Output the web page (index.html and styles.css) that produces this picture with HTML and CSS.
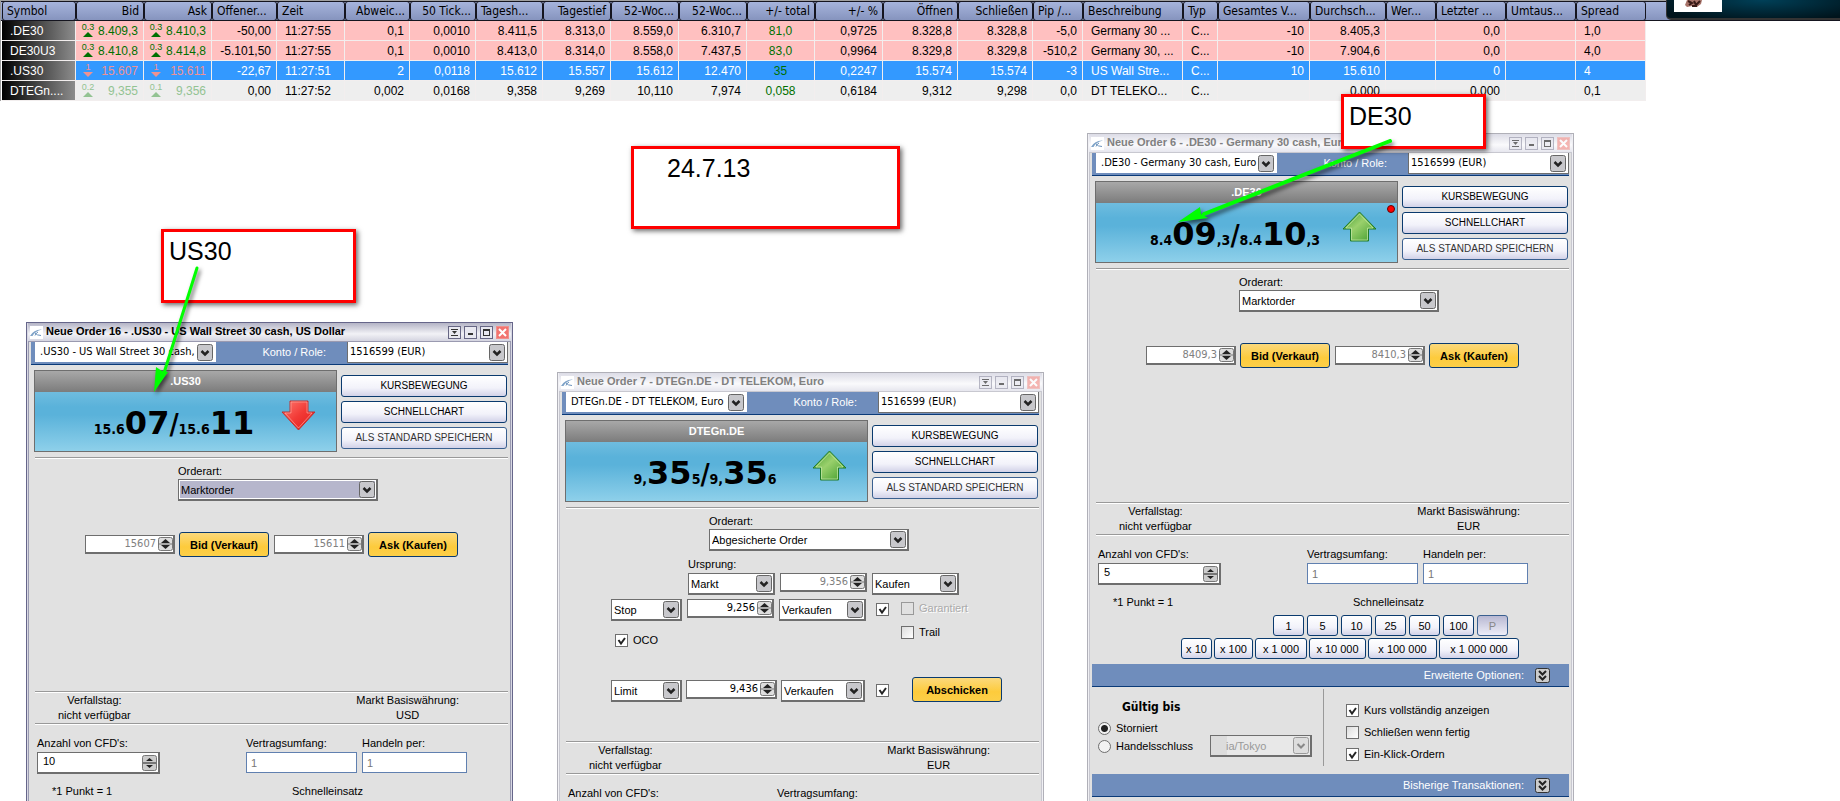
FILE: index.html
```html
<!DOCTYPE html>
<html lang="de">
<head>
<meta charset="utf-8">
<title>Trading Desktop</title>
<link rel="stylesheet" href="styles.css">
</head>
<body>
<svg class="defs" aria-hidden="true">
  <defs>
    <linearGradient id="g-green" x1="0" y1="0" x2="1" y2="1"><stop offset="0" stop-color="#3f9a2c"/><stop offset=".45" stop-color="#9ad06c"/><stop offset="1" stop-color="#3c9a2a"/></linearGradient>
    <linearGradient id="g-red" x1="0" y1="0" x2="1" y2="1"><stop offset="0" stop-color="#ff7a70"/><stop offset=".5" stop-color="#f23a36"/><stop offset="1" stop-color="#e01818"/></linearGradient>
  </defs>
  <symbol id="logo" viewBox="0 0 13 13"><rect width="13" height="13" fill="#fff"/><path d="M0 10 Q4 3 12 3.500 Q5 5 2.500 10z" fill="#7fa3c8"/><path d="M5 7 Q7 9.500 11 9.500 M5 9.500 Q6 7 8 6" stroke="#6b93bd" fill="none"/></symbol>
  <symbol id="up" viewBox="0 0 35 31"><path d="M17.500 1 L34 18 H26.500 V30 H8.500 V18 H1z" fill="url(#g-green)" stroke="#1f7a2a"/><path d="M17.500 3 L31 17 H25.500 V29 H9.500 V17 H4z" fill="none" stroke="#c4e8a8" stroke-opacity=".7"/></symbol>
  <symbol id="down" viewBox="0 0 35 31"><path d="M9 1 H27 V12 H34 L17.500 30 L1 12 H9z" fill="url(#g-red)" stroke="#c03030"/><path d="M10 2 H26 V13 H31 L17.500 28 L4 13 H10z" fill="none" stroke="#ffb0a8" stroke-opacity=".6"/></symbol>
  <symbol id="w-roll" viewBox="0 0 13 13"><path d="M3 3.500h7M3 9.500h7" stroke="#333"/><path d="M4 5h5L6.500 8z" fill="#333"/></symbol>
  <symbol id="w-min" viewBox="0 0 13 13"><path d="M4 8h5" stroke="#333" stroke-width="2"/></symbol>
  <symbol id="w-max" viewBox="0 0 13 13"><rect x="3.500" y="4.500" width="6" height="5" fill="none" stroke="#333"/><path d="M3 4h7" stroke="#333" stroke-width="2"/></symbol>
  <symbol id="w-close" viewBox="0 0 13 13"><path d="M3 3l7 7M10 3l-7 7" stroke="#fff" stroke-width="2"/></symbol>
  <symbol id="chev" viewBox="0 0 15 15"><rect x=".5" y=".5" width="14" height="14" rx="2" fill="#ccc" stroke="#333"/><path d="M4 3l3.500 3.500L11 3M4 8l3.500 3.500L11 8" fill="none" stroke="#222" stroke-width="2"/></symbol>
</svg>

<main class="desktop">
  <section class="quotes">
    <table class="quote-table">
      <colgroup>
        <col class="w74"><col class="w68"><col class="w68"><col class="w65"><col class="w68"><col class="w65"><col class="w66"><col class="w67"><col class="w68"><col class="w68"><col class="w68"><col class="w68"><col class="w68"><col class="w75"><col class="w75"><col class="w50"><col class="w100"><col class="w35"><col class="w92"><col class="w76"><col class="w50"><col class="w70"><col class="w70"><col class="w70">
      </colgroup>
      <thead>
        <tr><th>Symbol</th><th class="r">Bid</th><th class="r">Ask</th><th>Offener...</th><th>Zeit</th><th class="r">Abweic...</th><th class="r">50 Tick...</th><th>Tagesh...</th><th class="r">Tagestief</th><th class="r">52-Woc...</th><th class="r">52-Woc...</th><th class="r">+/- total</th><th class="r">+/- %</th><th class="r">Öffnen</th><th class="r">Schließen</th><th>Pip /...</th><th>Beschreibung</th><th>Typ</th><th>Gesamtes V...</th><th>Durchsch...</th><th>Wer...</th><th>Letzter ...</th><th>Umtaus...</th><th>Spread</th></tr>
      </thead>
      <tbody>
        <tr class="row-pink"><td class="sym">.DE30</td><td><div class="price"><span class="tick up">0.3</span>8.409,3</div></td><td><div class="price"><span class="tick up">0.3</span>8.410,3</div></td><td>-50,00</td><td class="l">11:27:55</td><td>0,1</td><td>0,0010</td><td>8.411,5</td><td>8.313,0</td><td>8.559,0</td><td>6.310,7</td><td class="c">81,0</td><td>0,9725</td><td>8.328,8</td><td>8.328,8</td><td>-5,0</td><td class="l">Germany 30 ...</td><td class="l">C...</td><td>-10</td><td>8.405,3</td><td></td><td>0,0</td><td></td><td class="l">1,0</td></tr>
        <tr class="row-pink"><td class="sym">DE30U3</td><td><div class="price"><span class="tick up">0.3</span>8.410,8</div></td><td><div class="price"><span class="tick up">0.3</span>8.414,8</div></td><td>-5.101,50</td><td class="l">11:27:55</td><td>0,1</td><td>0,0010</td><td>8.413,0</td><td>8.314,0</td><td>8.558,0</td><td>7.437,5</td><td class="c">83,0</td><td>0,9964</td><td>8.329,8</td><td>8.329,8</td><td>-510,2</td><td class="l">Germany 30, ...</td><td class="l">C...</td><td>-10</td><td>7.904,6</td><td></td><td>0,0</td><td></td><td class="l">4,0</td></tr>
        <tr class="row-blue"><td class="sym">.US30</td><td><div class="price"><span class="tick down">1</span>15.607</div></td><td><div class="price"><span class="tick down">1</span>15.611</div></td><td>-22,67</td><td class="l">11:27:51</td><td>2</td><td>0,0118</td><td>15.612</td><td>15.557</td><td>15.612</td><td>12.470</td><td class="c">35</td><td>0,2247</td><td>15.574</td><td>15.574</td><td>-3</td><td class="l">US Wall Stre...</td><td class="l">C...</td><td>10</td><td>15.610</td><td></td><td>0</td><td></td><td class="l">4</td></tr>
        <tr class="row-grey"><td class="sym">DTEGn....</td><td><div class="price"><span class="tick up">0.2</span>9,355</div></td><td><div class="price"><span class="tick up">0.1</span>9,356</div></td><td>0,00</td><td class="l">11:27:52</td><td>0,002</td><td>0,0168</td><td>9,358</td><td>9,269</td><td>10,110</td><td>7,974</td><td class="c">0,058</td><td>0,6184</td><td>9,312</td><td>9,298</td><td>0,0</td><td class="l">DT TELEKO...</td><td class="l">C...</td><td></td><td>0,000</td><td></td><td>0,000</td><td></td><td class="l">0,1</td></tr>
      </tbody>
    </table>
    <div class="banner"><svg class="avatar" viewBox="0 0 48 12"><rect width="48" height="12" fill="#fff"/><path d="M13 0h15l-1 4-4 3-5-1-5 1-2-2z" fill="#a8746a"/><path d="M14 1l4 2-3 2M20 1l2 4 4-4M18 6h5" stroke="#3a1c18" stroke-width="2" fill="none"/></svg></div>
  </section>

  <section class="window win-us active">
    <header class="titlebar"><svg class="logo"><use href="#logo"/></svg><h2>Neue Order 16 - .US30 - US Wall Street 30 cash, US Dollar</h2>
      <button class="wb" aria-label="Einrollen"><svg><use href="#w-roll"/></svg></button><button class="wb" aria-label="Minimieren"><svg><use href="#w-min"/></svg></button><button class="wb" aria-label="Maximieren"><svg><use href="#w-max"/></svg></button><button class="wb close" aria-label="Schließen"><svg><use href="#w-close"/></svg></button></header>
    <div class="body">
      <div class="account"><select class="instrument" aria-label="Instrument"><option>.US30 - US Wall Street 30 cash,</option></select><label for="acc1">Konto / Role:</label><select id="acc1" class="acc"><option>1516599 (EUR)</option></select></div>
      <div class="head">
        <div class="panel"><h3>.US30</h3><div class="rates"><p class="rate"><small>15.6</small><b>07</b><i>/</i><small>15.6</small><b>11</b></p><svg class="arrow"><use href="#down"/></svg></div></div>
        <div class="actions"><button class="btn">KURSBEWEGUNG</button><button class="btn">SCHNELLCHART</button><button class="btn dim">ALS STANDARD SPEICHERN</button></div>
      </div>
      <hr>
      <div class="order">
        <div class="kind"><label for="k1">Orderart:</label><select id="k1" class="focus"><option>Marktorder</option></select></div>
        <div class="deal"><input class="spin dimmed" aria-label="Bid" value="15607"><button class="gold">Bid (Verkauf)</button><input class="spin dimmed" aria-label="Ask" value="15611"><button class="gold">Ask (Kaufen)</button></div>
      </div>
      <hr>
      <div class="info"><p>Verfallstag:<br>nicht verfügbar</p><p>Markt Basiswährung:<br>USD</p></div>
      <hr>
      <div class="fields"><div><label for="n1">Anzahl von CFD's:</label><input id="n1" class="qty" value="10"></div><div><label for="v1">Vertragsumfang:</label><input id="v1" class="ro" value="1" readonly></div><div><label for="h1">Handeln per:</label><input id="h1" class="ro" value="1" readonly></div></div>
      <div class="hints"><span>*1 Punkt = 1</span><span>Schnelleinsatz</span></div>
    </div>
  </section>

  <section class="window win-dt">
    <header class="titlebar"><svg class="logo"><use href="#logo"/></svg><h2>Neue Order 7 - DTEGn.DE - DT TELEKOM, Euro</h2>
      <button class="wb" aria-label="Einrollen"><svg><use href="#w-roll"/></svg></button><button class="wb" aria-label="Minimieren"><svg><use href="#w-min"/></svg></button><button class="wb" aria-label="Maximieren"><svg><use href="#w-max"/></svg></button><button class="wb close" aria-label="Schließen"><svg><use href="#w-close"/></svg></button></header>
    <div class="body">
      <div class="account"><select class="instrument" aria-label="Instrument"><option>DTEGn.DE - DT TELEKOM, Euro</option></select><label for="acc2">Konto / Role:</label><select id="acc2" class="acc"><option>1516599 (EUR)</option></select></div>
      <div class="head">
        <div class="panel"><h3>DTEGn.DE</h3><div class="rates"><p class="rate"><small>9,</small><b>35</b><small>5</small><i>/</i><small>9,</small><b>35</b><small>6</small></p><svg class="arrow"><use href="#up"/></svg></div></div>
        <div class="actions"><button class="btn">KURSBEWEGUNG</button><button class="btn">SCHNELLCHART</button><button class="btn dim">ALS STANDARD SPEICHERN</button></div>
      </div>
      <hr>
      <div class="order">
        <div class="kind"><label for="k2">Orderart:</label><select id="k2"><option>Abgesicherte Order</option></select></div>
        <div class="hedge">
          <label class="origin" for="o1">Ursprung:</label>
          <div class="leg leg-origin"><select id="o1"><option>Markt</option></select><input class="spin dimmed" aria-label="Kurs" value="9,356"><select aria-label="Richtung"><option>Kaufen</option></select></div>
          <div class="leg leg-stop"><select class="type" aria-label="Stop"><option>Stop</option></select><input class="spin" aria-label="Stop Kurs" value="9,256"><select aria-label="Stop Richtung"><option>Verkaufen</option></select><input type="checkbox" aria-label="Stop aktiv" checked><label class="check off"><input type="checkbox" disabled>Garantiert</label></div>
          <div class="leg leg-oco"><label class="check oco"><input type="checkbox" checked>OCO</label><label class="check"><input type="checkbox">Trail</label></div>
          <div class="leg leg-limit"><select class="type" aria-label="Limit"><option>Limit</option></select><input class="spin" aria-label="Limit Kurs" value="9,436"><select aria-label="Limit Richtung"><option>Verkaufen</option></select><input type="checkbox" aria-label="Limit aktiv" checked><button class="gold">Abschicken</button></div>
        </div>
      </div>
      <hr>
      <div class="info"><p>Verfallstag:<br>nicht verfügbar</p><p>Markt Basiswährung:<br>EUR</p></div>
      <hr>
      <div class="fields"><div><label for="n2">Anzahl von CFD's:</label><input id="n2" class="qty"></div><div><label for="v2">Vertragsumfang:</label><input id="v2" class="ro" readonly></div></div>
    </div>
  </section>

  <section class="window win-de">
    <header class="titlebar"><svg class="logo"><use href="#logo"/></svg><h2>Neue Order 6 - .DE30 - Germany 30 cash, Euro</h2>
      <button class="wb" aria-label="Einrollen"><svg><use href="#w-roll"/></svg></button><button class="wb" aria-label="Minimieren"><svg><use href="#w-min"/></svg></button><button class="wb" aria-label="Maximieren"><svg><use href="#w-max"/></svg></button><button class="wb close" aria-label="Schließen"><svg><use href="#w-close"/></svg></button></header>
    <div class="body">
      <div class="account"><select class="instrument" aria-label="Instrument"><option>.DE30 - Germany 30 cash, Euro</option></select><label for="acc3">Konto / Role:</label><select id="acc3" class="acc"><option>1516599 (EUR)</option></select></div>
      <div class="head">
        <div class="panel"><h3>.DE30</h3><span class="dot"></span><div class="rates"><p class="rate"><small>8.4</small><b>09</b><small>,3</small><i>/</i><small>8.4</small><b>10</b><small>,3</small></p><svg class="arrow"><use href="#up"/></svg></div></div>
        <div class="actions"><button class="btn">KURSBEWEGUNG</button><button class="btn">SCHNELLCHART</button><button class="btn dim">ALS STANDARD SPEICHERN</button></div>
      </div>
      <hr>
      <div class="order">
        <div class="kind"><label for="k3">Orderart:</label><select id="k3"><option>Marktorder</option></select></div>
        <div class="deal"><input class="spin dimmed" aria-label="Bid" value="8409,3"><button class="gold">Bid (Verkauf)</button><input class="spin dimmed" aria-label="Ask" value="8410,3"><button class="gold">Ask (Kaufen)</button></div>
      </div>
      <hr>
      <div class="info"><p>Verfallstag:<br>nicht verfügbar</p><p>Markt Basiswährung:<br>EUR</p></div>
      <hr>
      <div class="fields"><div><label for="n3">Anzahl von CFD's:</label><input id="n3" class="qty" value="5"></div><div><label for="v3">Vertragsumfang:</label><input id="v3" class="ro" value="1" readonly></div><div><label for="h3">Handeln per:</label><input id="h3" class="ro" value="1" readonly></div></div>
      <div class="hints"><span>*1 Punkt = 1</span><span>Schnelleinsatz</span></div>
      <div class="quick first"><button class="btn">1</button><button class="btn">5</button><button class="btn">10</button><button class="btn">25</button><button class="btn">50</button><button class="btn">100</button><button class="btn preset">P</button></div>
      <div class="quick"><button class="btn">x 10</button><button class="btn q40">x 100</button><button class="btn q52">x 1 000</button><button class="btn q57">x 10 000</button><button class="btn q68">x 100 000</button><button class="btn q80">x 1 000 000</button></div>
      <div class="section-bar"><span>Erweiterte Optionen:</span><button class="expand" aria-label="Erweiterte Optionen"><svg><use href="#chev"/></svg></button></div>
      <div class="options">
        <div class="valid">
          <h4>Gültig bis</h4>
          <label class="check"><input type="radio" name="valid" checked>Storniert</label>
          <div class="session"><label class="check"><input type="radio" name="valid">Handelsschluss</label><select class="zone" aria-label="Zeitzone" disabled><option>ia/Tokyo</option></select></div>
        </div>
        <div class="flags">
          <label class="check"><input type="checkbox" checked>Kurs vollständig anzeigen</label>
          <label class="check"><input type="checkbox">Schließen wenn fertig</label>
          <label class="check"><input type="checkbox" checked>Ein-Klick-Ordern</label>
        </div>
      </div>
      <div class="section-bar"><span>Bisherige Transaktionen:</span><button class="expand" aria-label="Bisherige Transaktionen"><svg><use href="#chev"/></svg></button></div>
    </div>
  </section>

  <aside class="note note-us">US30</aside>
  <aside class="note note-date">24.7.13</aside>
  <aside class="note note-de">DE30</aside>
  <svg class="pointer pointer-us" viewBox="0 0 60 140"><path d="M51 8L18 113" stroke="#0f0" stroke-width="3" stroke-linecap="round"/><path d="M8 132L10 107L16 111L22 112z" fill="#0f0"/></svg>
  <svg class="pointer pointer-de" viewBox="0 0 230 100"><path d="M220 11L34 84" stroke="#0f0" stroke-width="4" stroke-linecap="round"/><path d="M8 92L30 77L31 84L38 88z" fill="#0f0"/></svg>
</main>
</body>
</html>
```

FILE: styles.css
```css
* { box-sizing: border-box; }
body { margin: 0; background: #fff; color: #000; font: 11px/14px "Liberation Sans", Arial, sans-serif; }
h2, h3, h4, p { margin: 0; }
button, input, select { font: inherit; color: inherit; margin: 0; border-radius: 0; }
hr { margin: 0 0 0 4px; border: 0; height: 2px; background: linear-gradient(#999 50%, #fff 50%); }
.defs { position: absolute; width: 0; height: 0; }
.desktop { position: relative; height: 100vh; overflow: hidden; }

/* Quote table */
.quotes { position: relative; padding-left: 1px; border-top: 1px solid #a0a0a0; border-left: 1px solid #a0a0a0; background: linear-gradient(#15151f 1px, #a6b4dc 1px, #8694be 19px, #15151f 19px) 0 0 / 100% 20px no-repeat; }
.quote-table { table-layout: fixed; border-collapse: separate; border-spacing: 0; width: 0; font-size: 12px; }
.w35 { width: 35px; } .w50 { width: 50px; } .w65 { width: 65px; } .w66 { width: 66px; } .w67 { width: 67px; }
.w68 { width: 68px; } .w70 { width: 70px; } .w74 { width: 74px; } .w75 { width: 75px; } .w76 { width: 76px; }
.w92 { width: 92px; } .w100 { width: 100px; }
.quote-table th { height: 20px; padding: 0 4px; border: 1px solid #15151f; border-radius: 3px; font: 12px/18px "DejaVu Sans Condensed", "DejaVu Sans", sans-serif; text-align: left; white-space: nowrap; overflow: hidden; }
.quote-table th.r { text-align: right; }
.quote-table td { height: 20px; padding: 0 5px 0 0; border-right: 1px solid #f2eeee; border-bottom: 1px solid #f2eeee; line-height: 18px; text-align: right; white-space: nowrap; overflow: hidden; }
.quote-table td.l { padding: 0 0 0 8px; text-align: left; }
.quote-table td.c { padding: 0; text-align: center; color: #007000; }
.quote-table td.sym { padding-left: 8px; text-align: left; color: #fff; background: linear-gradient(90deg, #000, #8c8c8c); }
.price { display: flex; justify-content: space-between; padding-left: 5px; }
.tick { width: 14px; font-size: 9px; line-height: 10px; text-align: center; }
.tick::after { content: ""; display: block; margin: 0 auto; width: 0; border: 5px solid transparent; border-top-width: 0; border-bottom-color: currentColor; }
.tick.down::after { border-top: 5px solid currentColor; border-bottom-width: 0; }
.row-pink { background: #ffc0c0; }
.row-pink .price { color: #007000; }
.row-blue { background: #3399ff; color: #fff; }
.row-blue .price { color: #ef9292; }
.row-grey { background: #eee; }
.row-grey .price { color: #93c393; }
.banner { position: absolute; top: 0; right: 0; width: 174px; height: 20px; margin-top: -1px; padding-left: 7px; border: solid #333; border-width: 0 0 2px 1px; border-radius: 0 0 0 5px; background: radial-gradient(ellipse at 55% 0, #004058, #00141c 85%); }
.avatar { display: block; width: 48px; height: 12px; }

/* Order windows */
.window { position: absolute; bottom: 0; width: 487px; padding: 0 1px; border: 1px solid #b0b0b8; border-bottom: 0; background: #f0f0f4; overflow: hidden; }
.window.active { border-color: #66668a; background: #d8d8e4; }
.win-us { left: 26px; top: 322px; }
.win-dt { left: 557px; top: 372px; }
.win-de { left: 1087px; top: 133px; }
.titlebar { display: flex; align-items: center; gap: 3px; height: 18px; padding: 0 2px; background: linear-gradient(#dcdce6, #fafafc 60%, #e6e6ee); }
.active .titlebar { background: linear-gradient(#b4b4c6, #f2f2f6 60%, #d4d4e0); }
.titlebar h2 { flex: 1; padding-bottom: 2px; font-size: 11px; white-space: nowrap; color: #808080; }
.active h2 { color: #000; }
.logo { width: 13px; height: 13px; }
.wb { width: 13px; height: 13px; padding: 0; border: 0; outline: 1px solid #9c9cae; outline-offset: -1px; background: #e8e8f0; opacity: .7; }
.wb svg { display: block; width: 13px; height: 13px; }
.wb.close { background: #f49a94; outline-color: #f0b0ac; }
.active .wb { opacity: 1; outline-color: #666684; }
.active .wb.close { background: #f27470; outline-color: #f0908c; }
.body { min-height: 100%; padding: 0 2px; border: 1px solid #c8c8d0; background: #e1e1e1; }
.active .body { border-color: #9a9ab0; }

select { appearance: none; height: 22px; padding: 0 22px 0 2px; border: 1px solid #6e6e6e; border-width: 1px 2px 2px 1px; background: #fff url("data:image/svg+xml,%3Csvg xmlns='http://www.w3.org/2000/svg' width='16' height='17'%3E%3Crect x='.5' y='.5' width='15' height='16' rx='2' fill='%23c8c8cc' stroke='%23666'/%3E%3Cpath d='M4.500 7l3.500 3.500L11.500 7' fill='none' stroke='%23222' stroke-width='2.500'/%3E%3C/svg%3E") right 1px center no-repeat; }
.account { display: flex; align-items: flex-start; height: 23px; padding-left: 4px; border-bottom: 1px solid #0a3a78; background: #6f8dbc; }
.account select { height: 20px; border: 0; font-family: "DejaVu Sans Condensed", "DejaVu Sans", sans-serif; }
.account .instrument { width: 181px; padding: 0 20px 0 5px; background-position: right 3px center; }
.account label { flex: 1; padding-right: 21px; line-height: 21px; text-align: right; color: #fff; }
.account .acc { width: 161px; height: 21px; border: 1px solid #6e6e6e; border-top: 0; background-position: right 2px center; }
.head { display: flex; gap: 4px; padding: 5px 1px 5px 3px; }
.panel { position: relative; flex: 1; height: 82px; border: 1px solid #6e6e6e; background: linear-gradient(#8ccbe6, #5ab2da 45%, #5ab2da 55%, #8ed0ea); }
.panel h3 { height: 21px; font-size: 11px; line-height: 21px; text-align: center; color: #fff; background: linear-gradient(#a8a8a8, #7c7c7c); }
.rates { display: flex; height: 59px; padding: 2px 20px 0 32px; }
.rate { flex: 1; font: bold 14px/59px "DejaVu Sans Condensed", "DejaVu Sans", sans-serif; text-align: center; white-space: nowrap; }
.rate small { font-size: 14px; }
.rate b { font: bold 32px/59px "DejaVu Sans", sans-serif; }
.rate i { font: bold 28px/59px "DejaVu Sans Condensed", sans-serif; }
.arrow { width: 35px; height: 31px; margin-top: 6px; }
.dot { position: absolute; right: 2px; top: 23px; width: 8px; height: 8px; border: 1px solid #600; border-radius: 50%; background: #f00; }
.actions { display: flex; flex-direction: column; justify-content: flex-end; gap: 4px; width: 166px; padding-bottom: 3px; font-size: 10px; }
.btn { height: 22px; padding: 0; border: 1px solid #0a3a6e; border-radius: 3px; background: linear-gradient(#fff, #f2f2fa 60%, #d2d2e8); }
.btn.dim { border-color: #3a6090; color: #333; }
.gold { width: 90px; height: 25px; padding: 0; border: 1px solid #0a3a6e; border-radius: 3px; background: linear-gradient(#fbd97c, #fdcb3c 60%, #fccf48); font-weight: bold; font-size: 11px; }

.order { height: 232px; padding-top: 5px; }
.kind { display: flex; flex-direction: column; gap: 1px; width: 200px; margin-left: 147px; }
.focus { background-color: #b6b6cc; box-shadow: inset 0 0 0 1px #fff; }
.deal { display: flex; align-items: center; gap: 4px; margin: 31px 0 0 54px; }
.deal .gold + .spin { margin-left: 1px; }
.spin { width: 90px; height: 19px; padding: 0 17px 2px 2px; border: 1px solid #6e6e6e; border-width: 1px 2px 2px 1px; text-align: right; font-family: "DejaVu Sans Condensed", "DejaVu Sans", sans-serif; background: #fff url("data:image/svg+xml,%3Csvg xmlns='http://www.w3.org/2000/svg' width='15' height='14'%3E%3Crect x='.5' y='.5' width='14' height='13' rx='2' fill='%23ddd' stroke='%23777'/%3E%3Cpath d='M0 7h15' stroke='%23777'/%3E%3Cpath d='M3 6l4.500-4L12 6zM3 8l4.500 4L12 8z' fill='%23222'/%3E%3C/svg%3E") right 0 center no-repeat; }
.dimmed { color: #808080; }

.hedge { display: flex; flex-direction: column; padding-left: 49px; }
.origin { margin: 5px 0 1px 77px; line-height: 16px; }
.leg { display: flex; gap: 5px; height: 22px; }
.leg select, .leg .spin { width: 87px; }
.leg select.type { width: 71px; }
.leg-origin { padding-left: 77px; margin-bottom: 4px; }
.leg > input[type="checkbox"] { margin: 4px 7px 0 5px; }
.leg .check { align-self: flex-start; }
.leg-stop .check { padding-top: 2px; }
.leg-oco { gap: 237px; padding: 4px 0 0 4px; }
.leg-oco .oco { width: 49px; padding-top: 8px; }
.leg-limit { align-items: flex-start; gap: 4px; margin-top: 37px; }
.leg.leg-limit .spin { width: 91px; }
.leg-limit select:not(.type) { width: 84px; }
.leg-limit > input[type="checkbox"] { margin-left: 7px; }
.leg-limit .gold { margin: -3px 0 0 12px; }

.info { display: flex; justify-content: space-between; padding: 0 49px 0 27px; line-height: 15px; text-align: center; }
.fields { display: grid; grid-template-columns: 209px 116px 105px; padding: 11px 0 0 6px; }
.fields div { display: flex; flex-direction: column; gap: 2px; }
.qty { width: 123px; height: 22px; padding: 0 20px 3px 5px; border: 1px solid #6e6e6e; border-width: 1px 2px 2px 1px; background: #fff url("data:image/svg+xml,%3Csvg xmlns='http://www.w3.org/2000/svg' width='15' height='16'%3E%3Crect x='.5' y='.5' width='14' height='15' rx='2' fill='%23ccc' stroke='%23777'/%3E%3Cpath d='M0 8h15' stroke='%23777' stroke-width='2'/%3E%3Cpath d='M4 6l3.500-3L11 6zM4 10l3.500 3L11 10z' fill='%23222'/%3E%3C/svg%3E") right 1px center no-repeat; }
.ro { width: 105px; height: 21px; padding: 0 4px; border: 1px solid #6080b0; color: #777; background: #fff; }
.fields div:nth-child(2) .ro { width: 111px; }
.hints { display: grid; grid-template-columns: 240px 1fr; padding: 10px 0 0 21px; }
.quick { display: flex; gap: 2px; padding-left: 89px; margin-bottom: 2px; }
.quick.first { gap: 3px; padding-left: 181px; margin-top: 6px; }
.quick .btn { width: 31px; height: 21px; }
.quick .q40 { width: 39px; } .quick .q52 { width: 52px; } .quick .q57 { width: 57px; } .quick .q68 { width: 69px; } .quick .q80 { width: 80px; }
.quick .preset { color: #888; border-color: #3a6090; background: linear-gradient(#b8b8d2, #eeeef8); }
.section-bar { display: flex; align-items: center; justify-content: flex-end; gap: 11px; height: 23px; margin-top: 5px; padding-right: 19px; border-bottom: 1px solid #0a3a78; background: #6f8dbc; color: #fff; }
.expand { width: 15px; height: 15px; padding: 0; border: 0; background: none; }
.expand svg { display: block; width: 15px; height: 15px; }
.options { display: grid; grid-template-columns: 232px 1fr; height: 82px; padding-top: 2px; }
.valid { padding: 11px 0 0 6px; border-right: 1px solid #999; height: 77px; }
.valid h4 { margin: 0 0 7px 24px; font: bold 12px/14px "DejaVu Sans Condensed", "DejaVu Sans", sans-serif; }
.session { display: flex; align-items: center; justify-content: space-between; padding-right: 11px; }
.zone { width: 102px; padding-left: 15px; color: #999; opacity: 1; background: linear-gradient(#dcdcdc, #dcdcdc) 0 0 / 16px 100% no-repeat, #e8e8e8 url("data:image/svg+xml,%3Csvg xmlns='http://www.w3.org/2000/svg' width='16' height='17'%3E%3Crect x='.5' y='.5' width='15' height='16' rx='2' fill='%23ddd' stroke='%23999'/%3E%3Cpath d='M4.500 7l3.500 3.500L11.500 7' fill='none' stroke='%23888' stroke-width='2'/%3E%3C/svg%3E") right 1px center no-repeat; }
.flags { display: flex; flex-direction: column; gap: 8px; padding: 14px 0 0 22px; }
.check { display: flex; align-items: center; gap: 5px; white-space: nowrap; }
.check.off { color: #aaa; text-shadow: 1px 1px #fff; }
input[type="checkbox"], input[type="radio"] { appearance: none; flex: none; width: 13px; height: 13px; border: 1px solid #6e6e6e; background: linear-gradient(135deg, #ddd, #fff); }
input[type="checkbox"]:disabled { border-color: #999; background: #e1e1e1; }
input[type="checkbox"]:checked { background: #fff url("data:image/svg+xml,%3Csvg xmlns='http://www.w3.org/2000/svg' width='11' height='11'%3E%3Cpath d='M2.500 5l2.500 3.500L9 3' fill='none' stroke='%23222' stroke-width='2'/%3E%3C/svg%3E") center no-repeat; }
input[type="radio"] { border-radius: 50%; background: #f2f2f2; }
input[type="radio"]:checked { background: radial-gradient(circle, #222 3px, #f2f2f2 4px); }

/* Annotations drawn over the desktop */
.note { position: absolute; padding: 5px; border: 3px solid #f00; background: #fff; box-shadow: 2px 2px 5px rgba(0, 0, 0, .6); font-size: 25px; line-height: 28px; }
.note-us { left: 161px; top: 229px; width: 195px; height: 74px; }
.note-date { left: 631px; top: 146px; width: 269px; height: 83px; padding-left: 33px; }
.note-de { left: 1341px; top: 94px; width: 145px; height: 55px; }
.pointer { position: absolute; filter: drop-shadow(2px 3px 2px rgba(0, 0, 0, .6)); }
.pointer-us { left: 146px; top: 260px; width: 60px; height: 140px; }
.pointer-de { left: 1170px; top: 130px; width: 230px; height: 100px; }
```
